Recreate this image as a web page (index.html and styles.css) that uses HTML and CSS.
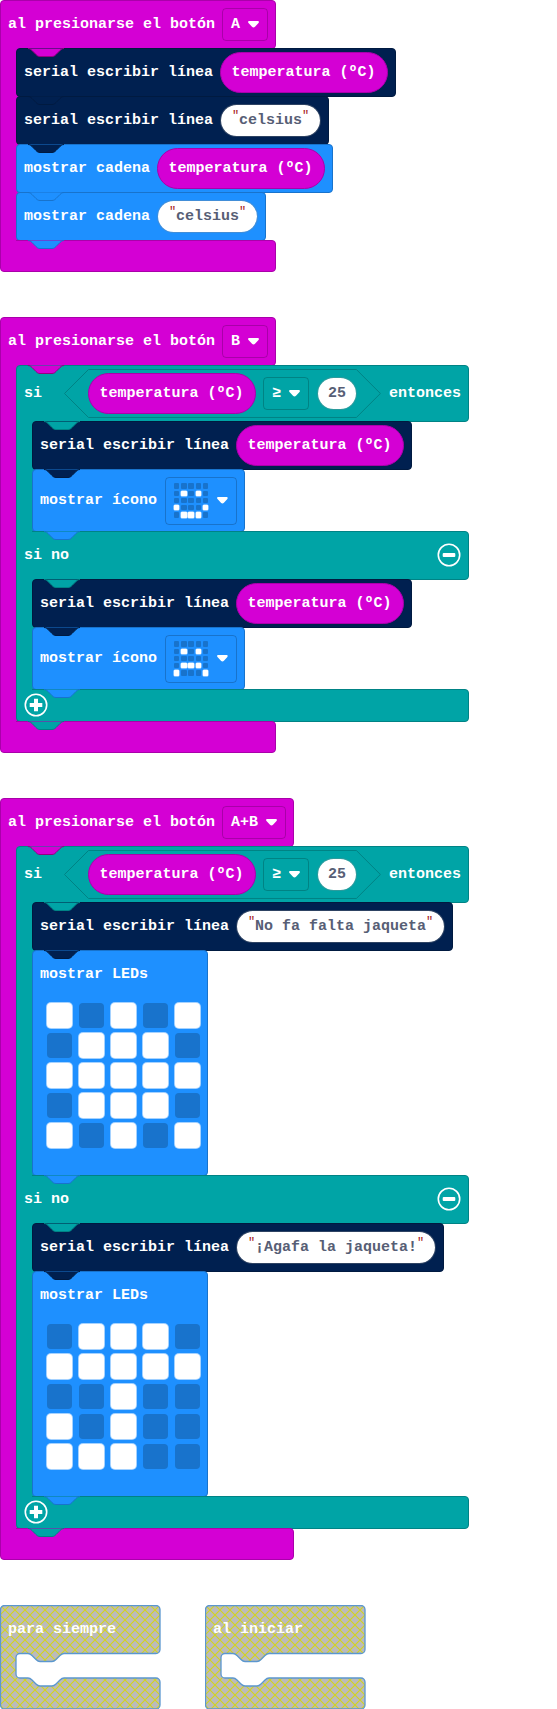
FILE: index.html
```
<!DOCTYPE html>
<html lang="es">
<head>
<meta charset="utf-8">
<title>Bloques</title>
<link rel="stylesheet" href="styles.css">
</head>
<body>
<svg class="defs" width="0" height="0">
  <defs>
    <symbol id="notch" viewBox="0 0 36 10" overflow="visible"><path d="M0 .5C2 .5 3 1.5 4 2.5l4 4c1 1 2 2 4 2h12c2 0 3-1 4-2l4-4c1-1 2-2 4-2" stroke-width="1"/></symbol>
    <symbol id="caret" viewBox="0 0 11 7"><path d="M1.300 0h8.400c1.200 0 1.600 1.200.8 2L7 5.800c-.8.9-2.200.9-3 0L.5 2C-.3 1.200.1 0 1.300 0z" fill="#fff"/></symbol>
    <symbol id="minus" viewBox="0 0 24 24"><circle cx="12" cy="12" r="10.700" fill="none" stroke="#fff" stroke-width="1.600"/><rect x="5.700" y="10" width="12.600" height="4" rx="1" fill="#fff"/></symbol>
    <symbol id="plus" viewBox="0 0 24 24"><circle cx="12" cy="12" r="10.700" fill="none" stroke="#fff" stroke-width="1.600"/><path d="M10 5.700h4V10h4.300v4H14v4.300h-4V14H5.700v-4H10z" fill="#fff"/></symbol>
    <pattern id="hatch" patternUnits="userSpaceOnUse" width="10" height="10"><rect width="10" height="10" fill="#bbb"/><path d="M0 0L10 10M10 0L0 10" stroke="#d4d41c" stroke-width="1.100"/></pattern>
  </defs>
</svg>
<main class="workspace">

<section class="event first">
  <div class="bar magenta head"><span>al presionarse el botón</span><span class="menu">A<svg class="caret"><use href="#caret"/></svg></span></div>
  <div class="body outer">
    <div class="bar navy"><svg class="notch m"><use href="#notch"/></svg><span>serial escribir línea</span><span class="pill">temperatura (ºC)</span></div>
    <div class="bar navy"><svg class="notch n"><use href="#notch"/></svg><span>serial escribir línea</span><span class="str"><q>"</q>celsius<q>"</q></span></div>
    <div class="bar blue"><svg class="notch n"><use href="#notch"/></svg><span>mostrar cadena</span><span class="pill">temperatura (ºC)</span></div>
    <div class="bar blue"><svg class="notch b"><use href="#notch"/></svg><span>mostrar cadena</span><span class="str"><q>"</q>celsius<q>"</q></span></div>
  </div>
  <div class="bar magenta foot"><svg class="notch inner b"><use href="#notch"/></svg></div>
</section>

<section class="event">
  <div class="bar magenta head"><span>al presionarse el botón</span><span class="menu">B<svg class="caret"><use href="#caret"/></svg></span></div>
  <div class="body outer">
    <div class="bar teal cond"><svg class="notch m"><use href="#notch"/></svg><span class="si">si</span>
      <span class="hex"><svg class="hexline" viewBox="0 0 317 49"><path d="M24.500.5h268l24 24-24 24h-268l-24-24z"/></svg><span class="pill">temperatura (ºC)</span><span class="menu op">≥<svg class="caret"><use href="#caret"/></svg></span><span class="num">25</span></span><span>entonces</span></div>
    <div class="body nested">
      <div class="bar navy"><svg class="notch t"><use href="#notch"/></svg><span>serial escribir línea</span><span class="pill">temperatura (ºC)</span></div>
      <div class="bar blue icon"><svg class="notch n"><use href="#notch"/></svg><span>mostrar ícono</span><span class="menu pic"><span class="mini"><i></i><i></i><i></i><i></i><i></i><i></i><b></b><i></i><b></b><i></i><i></i><i></i><i></i><i></i><i></i><b></b><i></i><i></i><i></i><b></b><i></i><b></b><b></b><b></b><i></i></span><svg class="caret"><use href="#caret"/></svg></span></div>
    </div>
    <div class="bar teal else"><svg class="notch inner b"><use href="#notch"/></svg><span>si no</span><svg class="round"><use href="#minus"/></svg></div>
    <div class="body nested">
      <div class="bar navy"><svg class="notch t"><use href="#notch"/></svg><span>serial escribir línea</span><span class="pill">temperatura (ºC)</span></div>
      <div class="bar blue icon"><svg class="notch n"><use href="#notch"/></svg><span>mostrar ícono</span><span class="menu pic"><span class="mini"><i></i><i></i><i></i><i></i><i></i><i></i><b></b><i></i><b></b><i></i><i></i><i></i><i></i><i></i><i></i><i></i><b></b><b></b><b></b><i></i><b></b><i></i><i></i><i></i><b></b></span><svg class="caret"><use href="#caret"/></svg></span></div>
    </div>
    <div class="bar teal end"><svg class="notch inner b"><use href="#notch"/></svg><svg class="round"><use href="#plus"/></svg></div>
  </div>
  <div class="bar magenta foot"><svg class="notch inner t"><use href="#notch"/></svg></div>
</section>

<section class="event wide">
  <div class="bar magenta head"><span>al presionarse el botón</span><span class="menu">A+B<svg class="caret"><use href="#caret"/></svg></span></div>
  <div class="body outer">
    <div class="bar teal cond"><svg class="notch m"><use href="#notch"/></svg><span class="si">si</span>
      <span class="hex"><svg class="hexline" viewBox="0 0 317 49"><path d="M24.500.5h268l24 24-24 24h-268l-24-24z"/></svg><span class="pill">temperatura (ºC)</span><span class="menu op">≥<svg class="caret"><use href="#caret"/></svg></span><span class="num">25</span></span><span>entonces</span></div>
    <div class="body nested">
      <div class="bar navy"><svg class="notch t"><use href="#notch"/></svg><span>serial escribir línea</span><span class="str"><q>"</q>No fa falta jaqueta<q>"</q></span></div>
      <div class="bar blue leds"><svg class="notch n"><use href="#notch"/></svg><span>mostrar LEDs</span><div class="grid"><b></b><i></i><b></b><i></i><b></b><i></i><b></b><b></b><b></b><i></i><b></b><b></b><b></b><b></b><b></b><i></i><b></b><b></b><b></b><i></i><b></b><i></i><b></b><i></i><b></b></div></div>
    </div>
    <div class="bar teal else"><svg class="notch inner b"><use href="#notch"/></svg><span>si no</span><svg class="round"><use href="#minus"/></svg></div>
    <div class="body nested">
      <div class="bar navy"><svg class="notch t"><use href="#notch"/></svg><span>serial escribir línea</span><span class="str"><q>"</q>¡Agafa la jaqueta!<q>"</q></span></div>
      <div class="bar blue leds"><svg class="notch n"><use href="#notch"/></svg><span>mostrar LEDs</span><div class="grid"><i></i><b></b><b></b><b></b><i></i><b></b><b></b><b></b><b></b><b></b><i></i><i></i><b></b><i></i><i></i><b></b><i></i><b></b><i></i><i></i><b></b><b></b><b></b><i></i><i></i></div></div>
    </div>
    <div class="bar teal end"><svg class="notch inner b"><use href="#notch"/></svg><svg class="round"><use href="#plus"/></svg></div>
  </div>
  <div class="bar magenta foot"><svg class="notch inner t"><use href="#notch"/></svg></div>
</section>

<div class="disabled">
  <div class="off"><svg viewBox="0 0 161 105"><path id="shell" d="M.5 4.500a4 4 0 0 1 4-4h151.500a4 4 0 0 1 4 4v40a4 4 0 0 1-4 4H64c-2 0-3 1-4 2l-4 4c-1 1-2 2-4 2H40c-2 0-3-1-4-2l-4-4c-1-1-2-2-4-2h-8a4 4 0 0 0-4 4v16.500a4 4 0 0 0 4 4h8c2 0 3 1 4 2l4 4c1 1 2 2 4 2h12c2 0 3-1 4-2l4-4c1-1 2-2 4-2h92a4 4 0 0 1 4 4v23a4 4 0 0 1-4 4h-151.500a4 4 0 0 1-4-4z" fill="url(#hatch)" stroke="#5b97cf" stroke-width="1.300"/></svg><span>para siempre</span></div>
  <div class="off"><svg viewBox="0 0 161 105"><use href="#shell"/></svg><span>al iniciar</span></div>
</div>
</main>
</body>
</html>
```
FILE: styles.css
```
body { margin: 0; background: #fff; color: #fff; font: bold 15px/18px "Liberation Mono", monospace; }
.defs { position: absolute; }
.workspace { height: 1709px; overflow: hidden; }
.event { margin-bottom: 45px; }
.bar { position: relative; display: flex; align-items: center; gap: 7px; box-sizing: border-box; width: max-content; height: 49px; margin-bottom: -1px; padding: 0 7px; border: 1px solid; border-radius: 4px; white-space: pre; }

/* Statement bodies: the strip on the left joins the bars above and below */
.body { position: relative; padding-left: 16px; background: linear-gradient(var(--fill), var(--fill)) 0 0 / 20px 100% no-repeat; }
.body::before { content: ""; position: absolute; z-index: 2; left: 0; top: 0; bottom: 0; width: 15px; border-left: 1px solid var(--edge); background: var(--fill); }
.outer { --fill: #d400d4; --edge: #aa00aa; }
.nested { --fill: #00a4a6; --edge: #008385; }

.magenta { background: #d400d4; border-color: #aa00aa; }
.navy { background: #002050; border-color: #001a40; }
.teal { background: #00a4a6; border-color: #008385; }
.blue { background: #1e90ff; border-color: #1873cc; }
.head { width: 276px; border-bottom-left-radius: 0; }
.foot { width: 276px; height: 32px; margin-bottom: 0; border-top-left-radius: 0; }
.wide > .head, .wide > .foot { width: 294px; }
.notch { position: absolute; left: 11px; top: -1px; width: 36px; height: 10px; overflow: visible; }
.inner { left: 27px; }
.m { fill: #d400d4; stroke: #93007f; }
.n { fill: #002050; stroke: #001a40; }
.b { fill: #1e90ff; stroke: #1873cc; }
.t { fill: #00a4a6; stroke: #008385; }
.pill, .str, .num, .menu { display: flex; align-items: center; box-sizing: border-box; }
.pill { height: 41px; padding: 0 11.500px 0 10.500px; border: 1px solid #aa00aa; border-radius: 21px; background: #d400d4; }
.str, .num { height: 33px; border: 1px solid #8b8b8b55; border-radius: 17px; background: #fff; background-clip: padding-box; color: #575e75; }
.str { padding: 0 11px; }
.num { width: 40px; justify-content: center; margin-left: 1px; }
q { quotes: none; width: 7px; margin-top: -9px; color: #a31515; font-size: 12px; font-weight: normal; }
q:last-child { text-align: right; }
q::before, q::after { content: none; }
.menu { height: 33px; padding: 0 8px; gap: 8px; border: 1px solid #00000033; border-radius: 4px; }
.caret { width: 11px; height: 7px; }
.cond { width: 453px; height: 57px; gap: 8px; border-bottom-left-radius: 0; }
.si { width: 32px; }
.hex { position: relative; display: flex; align-items: center; gap: 7px; width: 317px; height: 49px; box-sizing: border-box; padding-left: 24px; }
.hexline { position: absolute; inset: 0; fill: none; stroke: #008385; }
.icon { height: 63px; gap: 8px; }
.pic { height: 48px; width: 72px; gap: 9px; }
.mini { display: grid; grid-template-columns: repeat(5, 5.400px); gap: 1.800px; }
.mini i, .mini b { height: 5.400px; background: #1873cc; border-radius: 1px; }
.mini b { background: #fff; box-shadow: 0 0 0 .5px #fffc; }
.else, .end { width: 453px; border-top-left-radius: 0; }
.else { justify-content: space-between; border-bottom-left-radius: 0; }
.end { height: 33px; }
.round { width: 24px; height: 24px; margin-bottom: 2px; }
.leds { width: 176px; height: 226px; flex-direction: column; align-items: flex-start; gap: 19px; padding-top: 15px; }
.grid { display: grid; grid-template-columns: repeat(5, 25px); gap: 5px 7px; padding-left: 7px; }
.grid i, .grid b { height: 25px; border-radius: 4px; background: #1873cc; }
.grid b { background: #fff; box-shadow: 0 0 0 1px #a5d2ff; }
.disabled { display: flex; gap: 44px; }
.off { position: relative; width: 161px; height: 105px; }
.off svg { position: absolute; inset: 0; }
.off span { position: relative; display: block; padding: 16px 8px; }
```
